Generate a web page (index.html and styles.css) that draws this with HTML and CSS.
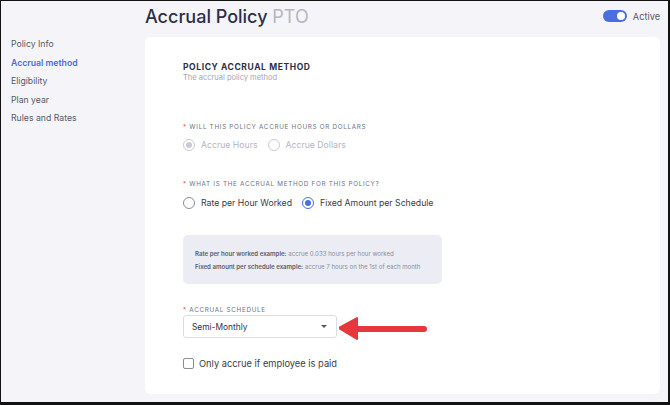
FILE: index.html
```html
<!DOCTYPE html>
<html lang="en">
<head>
  <meta charset="UTF-8">
  <title>Accrual Policy - PTO</title>
  <link rel="stylesheet" href="styles.css">
</head>
<body>

<div class="frame">
  <aside class="sidebar">
    <a class="nav-item">Policy Info</a>
    <a class="nav-item active">Accrual method</a>
    <a class="nav-item">Eligibility</a>
    <a class="nav-item">Plan year</a>
    <a class="nav-item">Rules and Rates</a>
  </aside>

  <main class="main">
    <header class="top">
      <h1>Accrual Policy <span class="sub">PTO</span></h1>
      <div class="status">
        <span class="toggle"><span class="knob"></span></span>
        <span>Active</span>
      </div>
    </header>

    <section class="card">
      <h2>POLICY ACCRUAL METHOD</h2>
      <p class="hint">The accrual policy method</p>

      <div class="field q1">
        <div class="label"><span class="req">*</span> WILL THIS POLICY ACCRUE HOURS OR DOLLARS</div>
        <div class="radios disabled">
          <label class="radio"><span class="dot checked"></span>Accrue Hours</label>
          <label class="radio"><span class="dot"></span>Accrue Dollars</label>
        </div>
      </div>

      <div class="field q2">
        <div class="label"><span class="req">*</span> WHAT IS THE ACCRUAL METHOD FOR THIS POLICY?</div>
        <div class="radios">
          <label class="radio"><span class="dot"></span>Rate per Hour Worked</label>
          <label class="radio"><span class="dot checked"></span>Fixed Amount per Schedule</label>
        </div>
      </div>

      <div class="info">
        <p><b>Rate per hour worked example:</b> accrue 0.033 hours per hour worked</p>
        <p><b>Fixed amount per schedule example:</b> accrue 7 hours on the 1st of each month</p>
      </div>

      <div class="field q3">
        <div class="label"><span class="req">*</span> ACCRUAL SCHEDULE</div>
        <div class="select">
          <span>Semi-Monthly</span>
          <span class="caret"></span>
        </div>
      </div>

      <label class="check"><span class="box"></span>Only accrue if employee is paid</label>

      <svg class="arrow" width="96" height="30" viewBox="0 0 96 30">
        <line x1="16" y1="15" x2="85" y2="15" stroke="#e5373c" stroke-width="6" stroke-linecap="round"/>
        <polygon points="0,14 18,4 18,25" fill="#e5373c" stroke="#e5373c" stroke-width="2" stroke-linejoin="round"/>
      </svg>
    </section>
  </main>
</div>

</body>
</html>
```

FILE: styles.css
```css
body { margin: 0; font-family: Inter, "Noto Sans", sans-serif; background: #111; }
.frame {
  width: 670px;
  height: 405px;
  box-sizing: border-box;
  border: 1px solid #111;
  border-right-width: 2px;
  border-bottom-width: 3px;
  background: #f5f5f9;
  display: grid;
  grid-template-columns: 144px 1fr;
  overflow: hidden;
}
.sidebar {
  padding-top: 34px;
  padding-left: 10px;
  display: flex;
  flex-direction: column;
}
.nav-item {
  font-size: 8.7px;
  color: #55586a;
  height: 18.5px;
  line-height: 18.5px;
}
.nav-item.active { color: #4a6de0; font-weight: 600; }

.main { display: flex; flex-direction: column; padding-right: 8px; }
.top {
  height: 36px;
  display: flex;
  align-items: center;
  justify-content: space-between;
}
h1 {
  margin: 0;
  margin-top: -6px;
  font-size: 18px;
  font-weight: 500;
  color: #2c2f48;
}
h1 .sub { color: #b4b6c0; font-weight: 400; }
.status {
  display: flex;
  align-items: center;
  gap: 6px;
  font-size: 9.2px;
  color: #555869;
  margin-top: -6px;
  margin-right: 0;
}
.toggle {
  width: 24px;
  height: 12px;
  border-radius: 6px;
  background: #4a6de0;
  position: relative;
}
.knob {
  position: absolute;
  right: 2px;
  top: 2px;
  width: 8px;
  height: 8px;
  border-radius: 50%;
  background: white;
}

.card {
  position: relative;
  flex: 1;
  margin-bottom: 8px;
  background: white;
  border-radius: 6px;
  padding: 25px 38px 0;
}
h2 {
  margin: 0;
  font-size: 8.5px;
  font-weight: 700;
  letter-spacing: 0.6px;
  color: #2c2f48;
}
.hint { margin: 1px 0 0; font-size: 7.5px; color: #a3a5b3; }

.field { display: flex; flex-direction: column; }
.q1 { margin-top: 41px; }
.q2 { margin-top: 29px; }
.q2 .radios { margin-top: 7px; }
.q3 { margin-top: 22px; }
.label {
  font-size: 6.3px;
  letter-spacing: 0.7px;
  color: #6e7080;
  height: 10px;
}
.req { color: #e0454b; }

.radios { display: flex; gap: 10px; margin-top: 6px; }
.radio {
  display: flex;
  align-items: center;
  gap: 6px;
  font-size: 8.7px;
  color: #3a3c4a;
}
.dot {
  width: 10px;
  height: 10px;
  border: 1px solid #8a8c98;
  border-radius: 50%;
  position: relative;
}
.dot.checked { border-color: #4a6de0; }
.dot.checked::after {
  content: "";
  position: absolute;
  left: 2px;
  top: 2px;
  width: 6px;
  height: 6px;
  border-radius: 50%;
  background: #4a6de0;
}
.disabled .radio { color: #b4b6c0; }
.disabled .dot { border-color: #c9cad2; }
.disabled .dot.checked::after { background: #c9cad2; }

.info {
  margin-top: 26px;
  width: 259px;
  height: 49px;
  box-sizing: border-box;
  background: #ececf5;
  border-radius: 5px;
  padding: 15px 12px 0;
}
.info p { margin: 0 0 6px; font-size: 6.1px; color: #8a8c9a; white-space: nowrap; }
.info b { color: #5a5c6a; font-weight: 600; }

.select {
  margin-top: -1px;
  width: 154px;
  height: 23px;
  box-sizing: border-box;
  border: 1px solid #dcdde3;
  border-radius: 3px;
  display: flex;
  align-items: center;
  justify-content: space-between;
  padding: 0 9px 0 8px;
  font-size: 8.4px;
  color: #2f3140;
}
.caret {
  width: 0;
  height: 0;
  border-left: 3.5px solid transparent;
  border-right: 3.5px solid transparent;
  border-top: 3.5px solid #555869;
}

.check {
  margin-top: 20px;
  display: flex;
  align-items: center;
  gap: 5px;
  font-size: 9.3px;
  color: #3a3c4a;
}
.box {
  width: 9px;
  height: 9px;
  border: 1px solid #8a8c98;
  border-radius: 2px;
}

.arrow { position: absolute; left: 194px; top: 277px; }
```
